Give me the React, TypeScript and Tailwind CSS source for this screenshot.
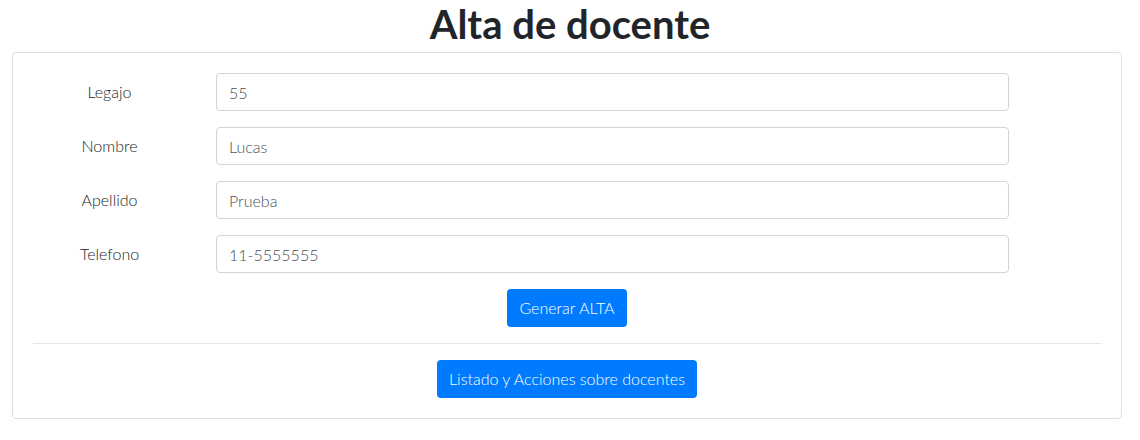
import React from 'react';

const fields = [
  { label: 'Legajo', value: '55' },
  { label: 'Nombre', value: 'Lucas' },
  { label: 'Apellido', value: 'Prueba' },
  { label: 'Telefono', value: '11-5555555' },
];

const App: React.FC = () => {
  return (
    <div className="min-h-[440px] bg-white text-[#212529] font-['Lato','Noto_Sans',sans-serif]">
      <h1 className="h-[48px] mb-[4px] text-center text-[40px] font-bold leading-[48px]">
        Alta de docente
      </h1>

      <div className="ml-[12px] w-[1110px] rounded-[4px] border border-[#dfdfdf] p-[20px] font-light">
        {fields.map((f) => (
          <div key={f.label} className="mb-[16px] flex items-center">
            <label className="w-[153px] text-center text-[16px]">{f.label}</label>
            <input
              readOnly
              value={f.value}
              className="ml-[30px] h-[38px] w-[793px] rounded-[4px] border border-[#ced4da] px-[12px] text-[16px] text-[#495057] outline-none"
            />
          </div>
        ))}

        <div className="flex justify-center">
          <button className="h-[38px] rounded-[4px] bg-[#007bff] px-[12px] text-[16px] text-white">
            Generar ALTA
          </button>
        </div>

        <hr className="my-[16px] border-t border-[#e5e5e5]" />

        <div className="flex justify-center">
          <button className="h-[38px] rounded-[4px] bg-[#007bff] px-[12px] text-[16px] text-white">
            Listado y Acciones sobre docentes
          </button>
        </div>
      </div>
    </div>
  );
};

export default App;
